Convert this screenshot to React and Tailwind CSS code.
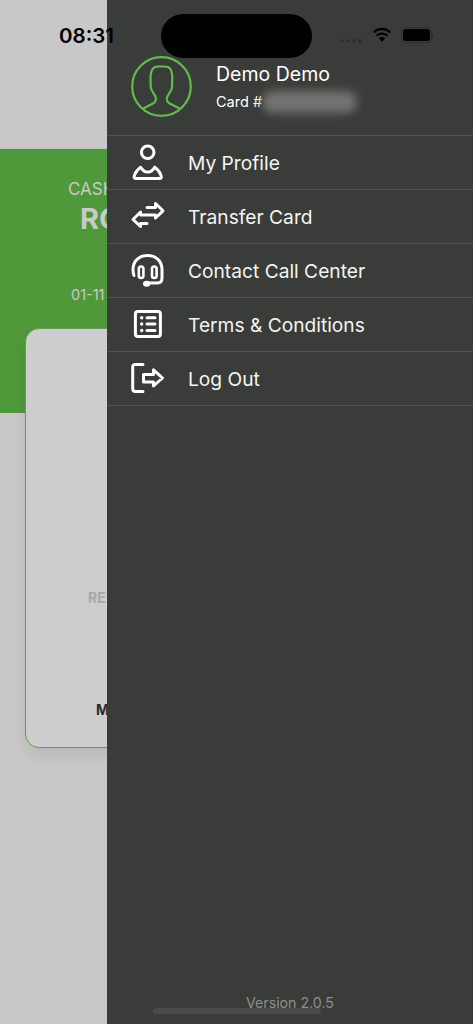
import React from "react";

// all menu icons share a 46x46 box, centred on the row
const Icon = ({ children }) => (
  <svg width="46" height="46" viewBox="0 0 46 46" fill="none" stroke="white" strokeWidth="3" strokeLinecap="round" strokeLinejoin="round" className="ml-[18px] mr-[17px] shrink-0">
    {children}
  </svg>
);

const ProfileIcon = () => (
  <Icon>
    <circle cx="22.700" cy="12.300" r="6.300" />
    <path d="M11 38.500H35c1.200 0 1.600-1 1.300-2-1-3.800-3.300-6.900-6.600-9.300-1.800 3.200-4 4.900-7 4.900s-5.200-1.700-7-4.900c-3.300 2.400-5.600 5.500-6.600 9.300-.3 1 .7 2 1.900 2z" />
  </Icon>
);

const TransferIcon = () => (
  <Icon>
    <path d="M22 13.500H30.500V9.500L38 16.800 30.500 24V21H15.500V18L8 25.500 15.500 32.500V29.500H22" />
  </Icon>
);

const HeadsetIcon = () => (
  <Icon>
    <path d="M9 27.500C8.200 25.500 8 23.500 8 21.500 8 13 14 7.500 22.500 7.500S37 13 37 21.500V30C37 33 35.500 35 32.500 35H23" />
    <rect x="13.800" y="18.500" width="4.600" height="11.500" rx="2.300" strokeWidth="2.600" />
    <rect x="27" y="18.500" width="4.600" height="11.500" rx="2.300" strokeWidth="2.600" />
    <ellipse cx="21.700" cy="35.700" rx="2.200" ry="1.500" fill="white" />
  </Icon>
);

const TermsIcon = () => (
  <Icon>
    <rect x="10.400" y="9.400" width="25" height="25" rx="2.500" />
    <circle cx="16.700" cy="15.700" r="1.700" fill="white" stroke="none" />
    <circle cx="16.700" cy="22" r="1.700" fill="white" stroke="none" />
    <circle cx="16.700" cy="28.500" r="1.700" fill="white" stroke="none" />
    <path d="M22 15.700H30M22 22H30M22 28.500H30" />
  </Icon>
);

const LogoutIcon = () => (
  <Icon>
    <path d="M18 8.500H10.500C8.500 8.500 7.700 9.500 7.700 11V32.500C7.700 34.500 8.500 35.500 10.500 35.500H18" />
    <path d="M18.500 18.500H28.500V13.800L37.500 22 28.500 30V26H18.500z" />
  </Icon>
);

const items = [
  { label: "My Profile", icon: <ProfileIcon /> },
  { label: "Transfer Card", icon: <TransferIcon /> },
  { label: "Contact Call Center", icon: <HeadsetIcon /> },
  { label: "Terms & Conditions", icon: <TermsIcon /> },
  { label: "Log Out", icon: <LogoutIcon /> },
];

const App = () => {
  return (
    <div className="relative flex h-[1024px] w-[473px] overflow-hidden bg-[#c8c8c8] font-['Inter',sans-serif]">
      {/* page behind the drawer */}
      <div className="w-[107px] shrink-0 overflow-hidden">
        <div className="w-[473px]">
          <div className="mt-[148px] h-[265px] bg-[#4f993a] border-t border-[#bdbdbd] pt-[29px] text-[#c9c9c9]">
            <p className="ml-[68px] text-[17px] leading-[22px]">CASH</p>
            <p className="ml-[80px] mt-[1px] text-[29px] leading-[36px] font-bold">RO</p>
            <p className="ml-[71px] mt-[49px] text-[14.500px] leading-[18px]">01-11</p>
          </div>
          <div className="relative ml-[25px] -mt-[85px] h-[420px] w-[423px] rounded-[14px] border border-[#5ea34a] bg-[#cdcdcd] shadow-[0_8px_14px_rgba(0,0,0,0.08)]">
            <p className="ml-[62px] mt-[261px] text-[14px] leading-[16px] font-bold text-[#a8a8a8]">RE</p>
            <p className="ml-[70px] mt-[96px] text-[14px] leading-[16px] font-bold text-[#2a2a2a]">M</p>
          </div>
        </div>
      </div>

      {/* drawer */}
      <div className="flex-1 bg-[#3a3c39] text-white">
        <div className="flex h-[136px] items-end border-b border-[#50524f] pb-[18px] pl-[24px]">
          <svg width="61" height="61" viewBox="0 0 61 61" fill="none" stroke="#5fbd48" strokeWidth="2.200" strokeLinejoin="round" className="mr-[24px]">
            <circle cx="30.500" cy="30.500" r="29.300" />
            <path d="M12.300 52.500 22.500 47.200C24.500 46 25.300 44 24.800 41.500 24.300 39 21 36 20.300 33 19.500 32 19.500 30.500 19.800 29.500 19.500 25 19.300 21 19.800 18 20.500 13 23.500 10.500 27 10.500H34C37.500 10.500 40.500 13 41 18 41.500 21 41.300 25 41 29.500 41.300 30.500 41.300 32 40.500 33 39.800 36 36.500 39 36 41.500 35.500 44 36.300 46 38.300 47.200L48.500 52.500" />
          </svg>
          <div className="mb-[4px]">
            <p className="text-[19.500px] leading-[26px]">Demo Demo</p>
            <div className="mt-[4px] flex items-center">
              <p className="text-[14.500px] leading-[20px]">Card #</p>
              <div className="h-[22px] w-[95px] rounded-full bg-[#737472] blur-[5px]"></div>
            </div>
          </div>
        </div>
        {items.map((item) => (
          <div key={item.label} className="flex h-[54px] items-center border-b border-[#50524f]">
            {item.icon}
            <p className="pt-[1px] text-[19.200px] leading-[26px] text-[#f4f4f4]">{item.label}</p>
          </div>
        ))}
      </div>

      {/* status bar */}
      <p className="absolute left-[59px] top-[23px] text-[20.500px] leading-[25px] font-semibold text-black">08:31</p>
      <div className="absolute left-[161px] top-[14px] h-[44px] w-[151px] rounded-full bg-black"></div>
      <div className="absolute left-[340px] top-[39px] flex gap-[2px]">
        <div className="h-[4px] w-[4px] rounded-full bg-[#2f302e]"></div>
        <div className="h-[4px] w-[4px] rounded-full bg-[#2f302e]"></div>
        <div className="h-[4px] w-[4px] rounded-full bg-[#2f302e]"></div>
        <div className="h-[4px] w-[4px] rounded-full bg-[#2f302e]"></div>
      </div>
      <svg className="absolute left-[372px] top-[27px]" width="20" height="16" viewBox="0 0 20 16" fill="black">
        <path d="M10 3.200c3 0 5.600 1.200 7.600 3.100l1.500-1.600C16.700 2.300 13.500.800 10 .800S3.300 2.300.9 4.700l1.500 1.600C4.400 4.400 7 3.200 10 3.200z" />
        <path d="M10 7.700c1.800 0 3.400.7 4.600 1.800l1.500-1.600C14.500 6.400 12.400 5.400 10 5.400S5.500 6.400 3.900 7.900l1.500 1.600C6.600 8.400 8.200 7.700 10 7.700z" />
        <path d="M10 10c-1.200 0-2.300.5-3.100 1.200L10 15l3.100-3.800C12.300 10.500 11.200 10 10 10z" />
      </svg>
      <div className="absolute left-[401px] top-[27px] h-[16px] w-[31px] rounded-[5px] border border-[#2f302e] p-[1px]">
        <div className="h-full w-full rounded-[3px] bg-black"></div>
      </div>
      <div className="absolute left-[432px] top-[33px] h-[5px] w-[1px] bg-[#2f302e]"></div>

      {/* footer */}
      <div className="absolute left-[153px] top-[1008px] h-[6px] w-[168px] rounded-full bg-[#4a4b49]"></div>
      <p className="absolute left-[246px] top-[994px] text-[14.200px] leading-[18px] text-[#8d8e8c]">Version 2.0.5</p>
    </div>
  );
};

export default App;
